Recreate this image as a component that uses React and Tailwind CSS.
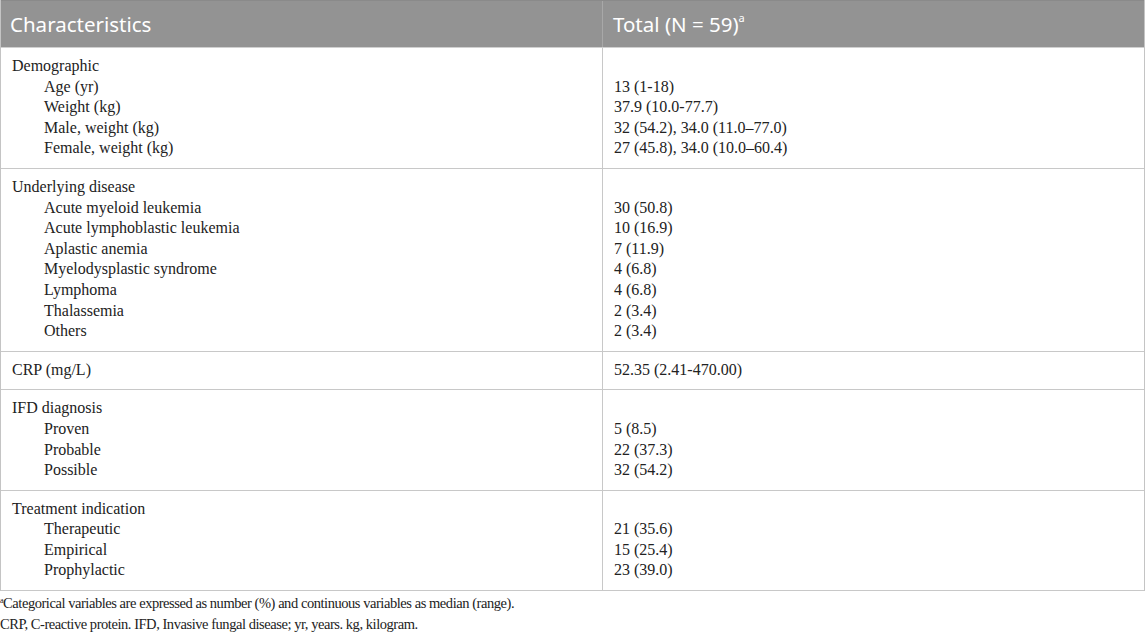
const groups = [
  {
    title: 'Demographic',
    rows: [
      ['Age (yr)', '13 (1-18)'],
      ['Weight (kg)', '37.9 (10.0-77.7)'],
      ['Male, weight (kg)', '32 (54.2), 34.0 (11.0–77.0)'],
      ['Female, weight (kg)', '27 (45.8), 34.0 (10.0–60.4)'],
    ],
  },
  {
    title: 'Underlying disease',
    rows: [
      ['Acute myeloid leukemia', '30 (50.8)'],
      ['Acute lymphoblastic leukemia', '10 (16.9)'],
      ['Aplastic anemia', '7 (11.9)'],
      ['Myelodysplastic syndrome', '4 (6.8)'],
      ['Lymphoma', '4 (6.8)'],
      ['Thalassemia', '2 (3.4)'],
      ['Others', '2 (3.4)'],
    ],
  },
  { title: 'CRP (mg/L)', value: '52.35 (2.41-470.00)', rows: [] },
  {
    title: 'IFD diagnosis',
    rows: [
      ['Proven', '5 (8.5)'],
      ['Probable', '22 (37.3)'],
      ['Possible', '32 (54.2)'],
    ],
  },
  {
    title: 'Treatment indication',
    rows: [
      ['Therapeutic', '21 (35.6)'],
      ['Empirical', '15 (25.4)'],
      ['Prophylactic', '23 (39.0)'],
    ],
  },
];

function App() {
  return (
    <div className="w-[1145px] bg-white text-[#222] font-['Liberation_Serif',serif]">
      <div className="border-x border-[#c4c4c4]">
        <div className="grid grid-cols-[602px_1fr] bg-[#939393] h-[48px] border-t border-[#8a8a8a] border-b border-b-[#d0d0d0] text-white text-[20.5px] font-['Noto_Sans',sans-serif]">
          <div className="pl-[9px] flex items-center border-r border-[#a8a8a8]">Characteristics</div>
          <div className="pl-[10px] flex items-center">
            Total (N = 59)<sup className="text-[11px] -top-[6px]">a</sup>
          </div>
        </div>
        {groups.map((g, i) => (
          <div key={i} className="grid grid-cols-[602px_1fr] border-b border-[#c8c8c8] text-[16px] leading-[20.6px]">
            <div className="pl-[11px] pt-[8px] pb-[9px] border-r border-[#c8c8c8]">
              <div>{g.title}</div>
              {g.rows.map((r, j) => (
                <div key={j} className="pl-[32px]">{r[0]}</div>
              ))}
            </div>
            <div className="pl-[11px] pt-[8px] pb-[9px]">
              <div>{g.value || '\u00a0'}</div>
              {g.rows.map((r, j) => (
                <div key={j}>{r[1]}</div>
              ))}
            </div>
          </div>
        ))}
      </div>
      <div className="pt-[2px] text-[14.5px] tracking-[-0.45px] leading-[21px]">
        <p>
          <sup className="text-[8px] -top-[5px]">a</sup>Categorical variables are expressed as number (%) and continuous variables as median (range).
        </p>
        <p>CRP, C-reactive protein. IFD, Invasive fungal disease; yr, years. kg, kilogram.</p>
      </div>
    </div>
  );
}

export default App;
